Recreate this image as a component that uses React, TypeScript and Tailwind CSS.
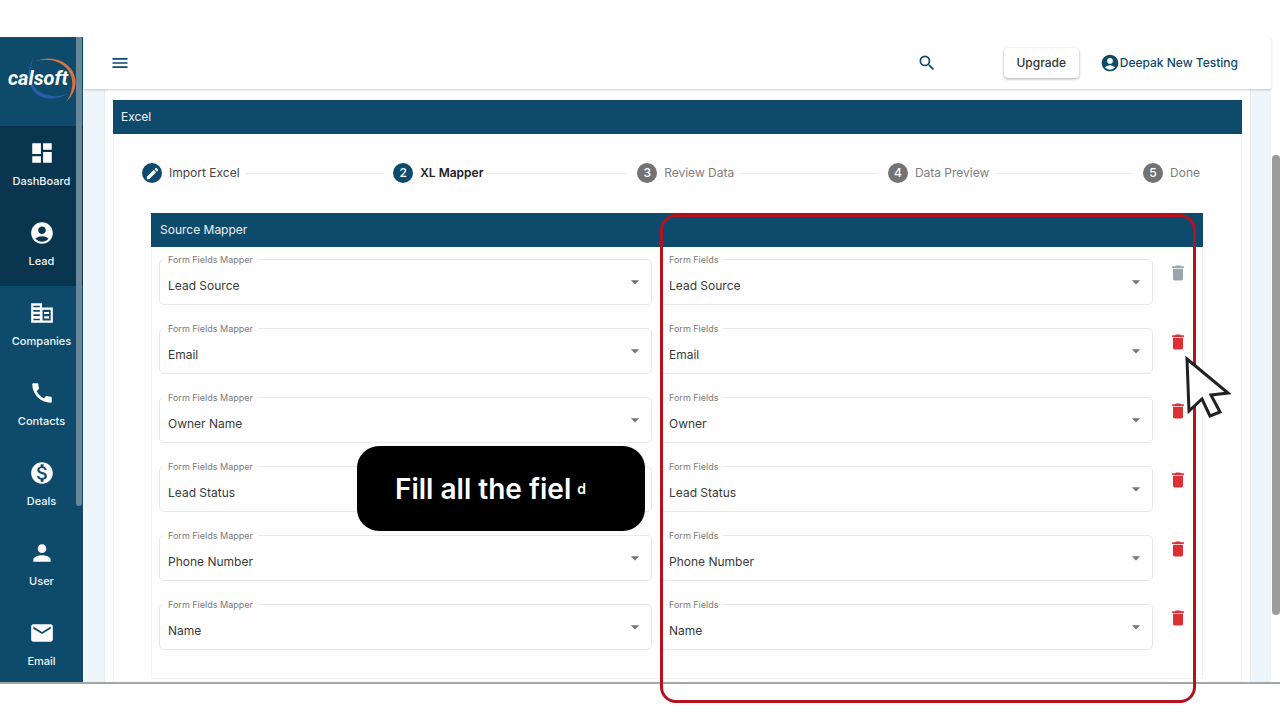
import { Fragment, useState } from "react";
import type { ComponentType } from "react";
import {
  MdAccountCircle,
  MdArrowDropDown,
  MdCall,
  MdCreate,
  MdDashboard,
  MdDelete,
  MdEmail,
  MdMenu,
  MdMonetizationOn,
  MdPerson,
  MdSearch,
} from "react-icons/md";

interface IconProps {
  size?: number;
  className?: string;
}

interface NavItem {
  label: string;
  icon: ComponentType<IconProps>;
  active?: boolean;
}

function CompaniesIcon({ size = 24, className }: IconProps) {
  return (
    <svg width={size} height={size} viewBox="0 0 24 24" fill="currentColor" className={className}>
      <path
        fillRule="evenodd"
        d="M2 3h10v4h10v14H2zM4 5.2h6v1.6H4zM4 9.2h6v1.6H4zM4 13.2h6v1.6H4zM4 17.2h6v1.6H4zM12.5 9h7.5v10h-7.5z"
      />
      <path d="M14 11h4.5v2H14zM14 15h4.5v2H14z" />
    </svg>
  );
}

const navItems: NavItem[] = [
  { label: "DashBoard", icon: MdDashboard, active: true },
  { label: "Lead", icon: MdAccountCircle, active: true },
  { label: "Companies", icon: CompaniesIcon },
  { label: "Contacts", icon: MdCall },
  { label: "Deals", icon: MdMonetizationOn },
  { label: "User", icon: MdPerson },
  { label: "Email", icon: MdEmail },
];

const steps = ["Import Excel", "XL Mapper", "Review Data", "Data Preview", "Done"];
const activeStep = 1;

const initialRows = [
  { source: "Lead Source", target: "Lead Source", locked: true },
  { source: "Email", target: "Email", locked: false },
  { source: "Owner Name", target: "Owner", locked: false },
  { source: "Lead Status", target: "Lead Status", locked: false },
  { source: "Phone Number", target: "Phone Number", locked: false },
  { source: "Name", target: "Name", locked: false },
];

const sourceOptions = initialRows.map((r) => r.source);
const targetOptions = initialRows.map((r) => r.target);

function Logo() {
  return (
    <div className="relative flex h-[89px] shrink-0 items-center pb-2 pl-2">
      <svg className="absolute inset-0 h-full w-full" viewBox="0 0 83 89" fill="none">
        <path
          d="M35 19C29 29 28 44 37 53C46 60 58 61 69 56C58 63 44 64 35 56C26 46 27 29 35 19Z"
          fill="#2a5ca8"
        />
        <path
          d="M36 24C47 19 63 21 71 32C79 43 76 56 66 65C73 55 75 43 68 33C60 23 47 21 36 24Z"
          fill="#d9733f"
        />
      </svg>
      <span className="relative font-[Roboto] text-xl leading-6 font-bold text-white italic">calsoft</span>
    </div>
  );
}

function Sidebar() {
  return (
    <aside className="relative flex w-[83px] shrink-0 flex-col bg-[#0d4a6b]">
      <Logo />
      <nav>
        {navItems.map(({ label, icon: Icon, active }) => (
          <a
            key={label}
            href="#"
            className={`flex h-20 flex-col items-center gap-[7px] pt-[14px] text-[11px] leading-4 font-medium text-[#f0f6f9] ${
              active ? "bg-[#09364e]" : ""
            }`}
          >
            <Icon size={26} className="text-white" />
            {label}
          </a>
        ))}
      </nav>
      <div className="absolute top-0 right-px h-[469px] w-1.5 rounded-b-full bg-[#688798]" />
    </aside>
  );
}

function Header() {
  return (
    <header className="relative z-10 flex h-[52px] shrink-0 items-center bg-white pr-[33px] pl-[26px] text-[#0d4a6b] shadow-[0_1px_2px_rgba(0,0,0,0.2)]">
      <button aria-label="Menu">
        <MdMenu size={20} />
      </button>
      <button aria-label="Search" className="ml-auto">
        <MdSearch size={20} />
      </button>
      <button className="ml-[67px] h-[30px] w-[75px] rounded-sm bg-white text-xs font-medium text-[#333] shadow-[0_1px_3px_rgba(0,0,0,0.35)]">
        Upgrade
      </button>
      <a href="#" className="ml-[21px] flex items-center text-xs font-medium">
        <MdAccountCircle size={20} />
        Deepak New Testing
      </a>
    </header>
  );
}

function Stepper() {
  return (
    <ol className="flex items-center pr-[41px] pl-7 text-xs leading-5">
      {steps.map((step, i) => (
        <Fragment key={step}>
          {i > 0 && <li aria-hidden="true" className="mr-2.5 ml-1.5 h-px flex-1 bg-[#ebebeb]" />}
          <li className="flex items-center">
            <span
              className={`flex size-5 items-center justify-center rounded-full font-medium text-white ${
                i <= activeStep ? "bg-[#0d4a6b]" : "bg-[#737373]"
              }`}
            >
              {i < activeStep ? <MdCreate size={15} /> : i + 1}
            </span>
            <span
              className={`ml-[7px] whitespace-nowrap ${
                i === activeStep
                  ? "font-semibold text-[#222]"
                  : i < activeStep
                    ? "text-[#444]"
                    : "text-[#808080]"
              }`}
            >
              {step}
            </span>
          </li>
        </Fragment>
      ))}
    </ol>
  );
}

interface SelectFieldProps {
  id: string;
  label: string;
  value: string;
  options: string[];
  onChange: (value: string) => void;
}

function SelectField({ id, label, value, options, onChange }: SelectFieldProps) {
  return (
    <div className="relative min-w-0 flex-1">
      <label
        htmlFor={id}
        className="absolute -top-[7px] left-1 bg-[#fefefe] px-[5px] text-[9px] leading-4 text-[#7b7b7b]"
      >
        {label}
      </label>
      <select
        id={id}
        value={value}
        onChange={(e) => onChange(e.target.value)}
        className="h-[46px] w-full appearance-none rounded-[5px] border border-[#e9e9e9] px-2 pt-[7px] text-xs text-[#3a3a3a]"
      >
        {options.map((o) => (
          <option key={o}>{o}</option>
        ))}
      </select>
      <MdArrowDropDown size={20} className="pointer-events-none absolute top-[13px] right-[7px] text-[#757575]" />
    </div>
  );
}

function SourceMapper() {
  const [rows, setRows] = useState(initialRows);

  const updateRow = (index: number, key: "source" | "target", value: string) => {
    setRows(rows.map((r, i) => (i === index ? { ...r, [key]: value } : r)));
  };

  return (
    <section className="mr-[38px] ml-[37px] border-x border-b border-[#f3f3f3] pb-7">
      <h2 className="-mx-px h-[34px] bg-[#0d4a6b] px-[9px] text-xs leading-[34px] text-[#eef4f7]">
        Source Mapper
      </h2>
      <div className="mt-3 flex flex-col gap-[23px] pr-[14px] pl-[7px]">
        {rows.map((row, i) => (
          <div key={row.source} className="flex items-start gap-2">
            <SelectField
              id={`source-${i}`}
              label="Form Fields Mapper"
              value={row.source}
              options={sourceOptions}
              onChange={(v) => updateRow(i, "source", v)}
            />
            <SelectField
              id={`target-${i}`}
              label="Form Fields"
              value={row.target}
              options={targetOptions}
              onChange={(v) => updateRow(i, "target", v)}
            />
            <button
              aria-label={`Delete ${row.source}`}
              disabled={row.locked}
              onClick={() => setRows(rows.filter((_, n) => n !== i))}
              className="mt-1 ml-[7px] text-[#dc3034] disabled:text-[#98a6b0]"
            >
              <MdDelete size={20} />
            </button>
          </div>
        ))}
      </div>
    </section>
  );
}

function Cursor() {
  return (
    <svg className="absolute top-[355px] right-[49px]" width="46" height="64" viewBox="0 0 46 64">
      <path
        d="M2 4L43 38L26 40L35 57L25 61L17 44L4 56Z"
        fill="#fff"
        stroke="#222"
        strokeWidth="3"
      />
    </svg>
  );
}

export default function App() {
  return (
    <div className="relative flex h-screen flex-col overflow-hidden bg-white pt-[37px] pb-9 font-[Inter,sans-serif]">
      <div className="flex min-h-0 flex-1 overflow-hidden border-b-2 border-[#a3a5a7]">
        <Sidebar />
        <div className="ml-px flex min-w-0 flex-1 flex-col bg-[#eff6fb]">
          <Header />
          <main className="mx-5 min-h-0 flex-1 overflow-hidden border-x border-[#e6ecf0] bg-[#fefefe] px-2 pt-[11px]">
            <div className="h-full border-x border-[#f3f3f3]">
              <h1 className="-mx-px mb-[29px] h-[34px] bg-[#0d4a6b] px-2 text-xs leading-[34px] text-[#eef4f7]">
                Excel
              </h1>
              <Stepper />
              <div className="mt-[30px]">
                <SourceMapper />
              </div>
            </div>
          </main>
        </div>
        <div className="w-[9px] shrink-0 pt-[118px] pl-px">
          <div className="h-[460px] rounded-full bg-[#9b9b9b]" />
        </div>
      </div>

      {/* Walkthrough highlight, caption and pointer */}
      <div className="pointer-events-none absolute top-[214px] right-[84px] h-[489px] w-[536px] rounded-2xl border-[3px] border-[#b5121f]" />
      <p className="absolute top-[446px] left-[357px] flex h-[85px] w-72 items-center rounded-[22px] bg-black pl-[38px] text-[28px] font-semibold text-white">
        <span className="whitespace-pre">Fill all the fiel</span>
        <span className="ml-1.5 text-sm">d</span>
      </p>
      <Cursor />
    </div>
  );
}
